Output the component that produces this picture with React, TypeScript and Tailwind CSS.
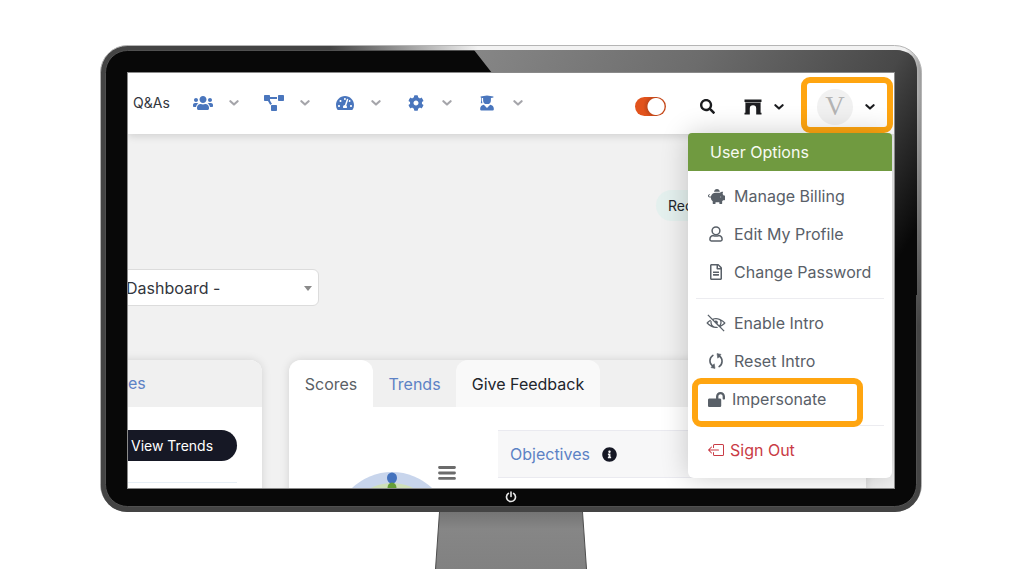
import React from 'react';
import {
	FaCog,
	FaInfoCircle,
	FaLockOpen,
	FaPiggyBank,
	FaProjectDiagram,
	FaRegFileAlt,
	FaSearch,
	FaTachometerAlt,
	FaUsers,
} from 'react-icons/fa';
import { BsBoxArrowLeft } from 'react-icons/bs';
import { LiaEyeSlash } from 'react-icons/lia';

function Chevron({ className }: { className: string }) {
	return (
		<svg viewBox="0 0 10 10" className={`w-2.5 h-2.5 ${className}`} fill="none">
			<path
				d="M1.4 3.2 L5 6.6 L8.6 3.2"
				stroke="currentColor"
				strokeWidth="2.1"
				strokeLinecap="round"
				strokeLinejoin="round"
			/>
		</svg>
	);
}

function GraduateIcon() {
	return (
		<svg viewBox="0 0 14 16" className="h-4 w-3.5" fill="currentColor">
			<path d="M7 0.4 L13.4 1.6 V2.6 L10.900 3.1 V5.2 A3.9 3.9 0 0 1 3.1 5.2 V3.1 L1.9 2.9 V5.6 L2.4 8.2 H0.8 L1.2 5.6 V2.6 L0.6 2.400 V1.6 Z" />
			<path d="M3.800 9.8 L7 12.9 L10.2 9.8 C12.4 10 13.800 11.6 13.8 13.6 V14.4 Q13.8 15.5 12.7 15.5 H1.3 Q0.2 15.5 0.2 14.4 V13.6 C0.2 11.6 1.6 10 3.8 9.8 Z" />
		</svg>
	);
}

function ArchIcon() {
	return (
		<svg viewBox="0 0 18 16" className="h-4 w-[18px]" fill="currentColor">
			<path d="M0.5 0.5 H17.5 V3 H16.6 V13.8 H17.5 V15.5 H12.2 V9.4 A3.2 3.2 0 0 0 5.8 9.4 V15.5 H0.5 V13.8 H1.4 V3 H0.5 Z" />
			<path d="M1.4 3.5 H16.6" stroke="#fff" strokeWidth="0.5" />
		</svg>
	);
}

function PersonIcon() {
	return (
		<svg viewBox="0 0 14 16" className="h-4 w-3.5" fill="none" stroke="currentColor" strokeWidth="1.5">
			<circle cx="7" cy="4.8" r="3.9" />
			<path
				d="M4.2 9.6 C1.9 9.9 0.9 11.6 0.9 13.6 Q0.9 15 2.3 15 H11.7 Q13.1 15 13.1 13.6 C13.1 11.6 12.1 9.9 9.8 9.6 Q7 10.6 4.2 9.6 Z"
				strokeLinejoin="round"
			/>
		</svg>
	);
}

function ResetIcon() {
	return (
		<svg viewBox="0 0 16 16" className="w-4 h-4" fill="none">
			<path
				d="M4.9 2.4 A6.4 6.4 0 0 0 4.6 13 M11.1 13.6 A6.4 6.4 0 0 0 11.4 3"
				stroke="currentColor"
				strokeWidth="1.6"
				strokeLinecap="round"
			/>
			<path
				d="M3 14.6 L7 15.4 L6.2 10.8 Z M13 1.4 L9 0.6 L9.8 5.2 Z"
				fill="currentColor"
				stroke="currentColor"
				strokeWidth="0.6"
				strokeLinejoin="round"
			/>
		</svg>
	);
}

const navItems = [
	{ label: 'People', icon: <FaUsers size={20} /> },
	{ label: 'Projects', icon: <FaProjectDiagram size={20} /> },
	{ label: 'Dashboards', icon: <FaTachometerAlt size={18} /> },
	{ label: 'Settings', icon: <FaCog size={16} /> },
	{ label: 'Learning', icon: <GraduateIcon /> },
];

function Header() {
	return (
		<header className="relative z-10 flex h-[61px] items-center bg-white pl-[5px] shadow-[0_2px_8px_rgba(0,0,0,0.14)]">
			<nav className="flex items-center gap-[26px] pb-0.5">
				<a href="#qa" className="-mr-1 w-[39px] text-[14px] leading-5 text-[#33363d]">
					Q&amp;As
				</a>
				{navItems.map((item) => (
					<button
						key={item.label}
						aria-label={item.label}
						className="flex w-[45px] items-center justify-between text-[#4a76bd]"
					>
						<span className="flex w-[18px] justify-center">
							<span className="shrink-0">{item.icon}</span>
						</span>
						<Chevron className="text-[#a5a5aa]" />
					</button>
				))}
			</nav>
			<div className="ml-auto flex items-center pt-1.5 text-[#1b1c1f]">
				<label className="mr-[34px] flex">
					<input
						type="checkbox"
						defaultChecked
						aria-label="Theme"
						className="h-[19px] w-[31px] appearance-none rounded-full bg-[radial-gradient(circle_at_21px_50%,#fff_8px,#c3481a_9px,#e2531c_13px)]"
					/>
				</label>
				<button aria-label="Search" className="mr-[29px]">
					<FaSearch size={15} />
				</button>
				<button aria-label="Places" className="mr-[17px] flex items-center gap-3">
					<ArchIcon />
					<Chevron className="text-[#1b1c1f]" />
				</button>
				<button
					aria-label="User menu"
					className="-mt-1 mr-px flex h-14 w-[92px] items-center gap-3 rounded-[9px] border-6 border-[#ffa510] pt-1 pl-2.5"
				>
					<span className="flex size-9 items-center justify-center rounded-full bg-[#f1f1f1] font-['Liberation_Serif',serif] text-[27px] leading-none text-[#b4b4b4]">
						V
					</span>
					<Chevron className="text-[#1b1c1f]" />
				</button>
			</div>
		</header>
	);
}

function MenuItem({
	icon,
	children,
	className = 'gap-2 text-[#596068]',
}: {
	icon: React.ReactNode;
	children: React.ReactNode;
	className?: string;
}) {
	return (
		<li>
			<button className={`flex h-[38px] w-full items-center pb-0.5 pl-[18px] ${className}`}>
				<span className="flex w-5 justify-center">{icon}</span>
				{children}
			</button>
		</li>
	);
}

function UserMenu() {
	return (
		<div className="absolute top-[60px] right-0.5 z-20 w-[204px] rounded-md bg-white pb-2 text-[16px] leading-6 shadow-[0_0_28px_rgba(0,0,0,0.2)]">
			<h2 className="rounded-t-[4px] bg-[#709a40] py-[7px] pl-[22px] text-[#f8fbf3]">User Options</h2>
			<ul className="pt-[7px]">
				<MenuItem icon={<FaPiggyBank size={17} />}>Manage Billing</MenuItem>
				<MenuItem icon={<PersonIcon />}>Edit My Profile</MenuItem>
				<MenuItem icon={<FaRegFileAlt size={16} />}>Change Password</MenuItem>
			</ul>
			<hr className="mx-2 my-1.5 border-[#ececf0]" />
			<ul className="relative">
				<MenuItem icon={<LiaEyeSlash size={20} />}>Enable Intro</MenuItem>
				<MenuItem icon={<ResetIcon />}>Reset Intro</MenuItem>
				<MenuItem icon={<FaLockOpen size={17} />} className="gap-1.5 text-[#596068]">
					Impersonate
				</MenuItem>
				<li
					aria-hidden="true"
					className="pointer-events-none absolute -bottom-2 left-1 h-[49px] w-[171px] rounded-[9px] border-6 border-[#ffa510]"
				/>
			</ul>
			<hr className="mx-2 my-1.5 border-[#ececf0]" />
			<ul>
				<MenuItem icon={<BsBoxArrowLeft size={16} />} className="gap-1 text-[#c93b45]">
					Sign Out
				</MenuItem>
			</ul>
		</div>
	);
}

function Dashboard() {
	return (
		<main className="text-[16px] leading-6">
			<div className="flex justify-end pt-14 pr-[131px]">
				<span className="w-[107px] rounded-full bg-[#e4f0ee] py-[5px] px-3 text-[14px] leading-[21px] text-[#22252c]">
					Rec
				</span>
			</div>
			<div className="relative mt-12 -ml-5 w-[211px]">
				<select
					aria-label="Dashboard"
					className="h-[37px] w-full appearance-none rounded-md border border-[#dcdcdc] bg-white pl-[17px] text-[#33363d]"
				>
					<option>Dashboard -</option>
				</select>
				<svg viewBox="0 0 8 5" className="pointer-events-none absolute top-[17px] right-[7px] h-[5px] w-2">
					<path d="M0 0 H8 L4 5 Z" fill="#8a8a8a" />
				</svg>
			</div>
			<div className="mt-[54px] flex gap-[27px]">
				<section className="-ml-5 h-52 w-[154px] shrink-0 rounded-t-xl bg-white shadow-[0_0_10px_rgba(0,0,0,0.13)]">
					<h3 className="h-[47px] rounded-t-xl bg-[#f0f0f0] pt-[11px] pl-5 text-[#5d82c5]">es</h3>
					<div className="mr-[25px] border-b border-[#e6eef5] pt-[23px] pb-[21px]">
						<button className="h-[31px] w-full rounded-r-full bg-[#161825] pl-[23px] text-left text-[14px] leading-5 text-white">
							View Trends
						</button>
					</div>
				</section>
				<section className="mr-7 h-52 flex-1 rounded-t-xl bg-white shadow-[0_0_10px_rgba(0,0,0,0.13)]">
					<div className="flex h-[47px] rounded-t-xl bg-[#f0f0f0]">
						<button className="w-[84px] rounded-t-xl bg-white text-[#5b5f66]">Scores</button>
						<button className="w-[83px] text-[#5d82c5]">Trends</button>
						<button className="w-36 rounded-t-xl bg-[#f9f9f9] text-[#22252c]">Give Feedback</button>
					</div>
					<div className="flex items-start pt-[23px]">
						<svg viewBox="0 0 120 120" className="mt-10 ml-[43px] size-[120px] shrink-0">
							<circle cx="60" cy="60" r="58" fill="#c8d5ec" />
							<circle cx="60" cy="60" r="47" fill="#cfe0b9" />
							<ellipse cx="60" cy="8" rx="5" ry="5.5" fill="#4472bd" />
							<ellipse cx="60" cy="18" rx="4.5" ry="5.5" fill="#669f38" />
						</svg>
						<button aria-label="Chart menu" className="mt-9 -ml-3.5">
							<svg viewBox="0 0 18 14" className="h-3.5 w-[18px]" stroke="#6b6b6b" strokeWidth="2.8" strokeLinecap="round">
								<path d="M1.5 1.5 H16.5 M1.5 7 H16.5 M1.5 12.4 H16.5" />
							</svg>
						</button>
						<h3 className="ml-[42px] flex h-12 flex-1 items-center gap-3 border-y border-[#eaeaf0] bg-[#f7f7f8] pl-3 text-[#5d82c5]">
							Objectives <FaInfoCircle size={15} className="text-[#161825]" />
						</h3>
					</div>
				</section>
			</div>
		</main>
	);
}

function Bezel() {
	return (
		<svg viewBox="0 0 822 467" preserveAspectRatio="none" className="absolute inset-0 h-full w-full">
			<defs>
				<linearGradient id="rim" x1="0" y1="0" x2="1" y2="0">
					<stop offset="0" stopColor="#444" />
					<stop offset="0.28" stopColor="#444" />
					<stop offset="0.46" stopColor="#f2f2f2" />
					<stop offset="0.98" stopColor="#f2f2f2" />
					<stop offset="1" stopColor="#999" />
				</linearGradient>
				<linearGradient id="rimLow" x1="0" y1="0" x2="0" y2="1">
					<stop offset="0.1" stopColor="#444" stopOpacity="0" />
					<stop offset="0.6" stopColor="#444" />
					<stop offset="1" stopColor="#444" />
				</linearGradient>
				<linearGradient id="shine" gradientUnits="userSpaceOnUse" x1="380" y1="0" x2="800" y2="250">
					<stop offset="0" stopColor="#868686" />
					<stop offset="0.4" stopColor="#6c6c6c" />
					<stop offset="0.75" stopColor="#484848" />
					<stop offset="0.96" stopColor="#080808" />
				</linearGradient>
			</defs>
			<rect x="0.5" y="0.5" width="821" height="466" rx="27" fill="url(#rim)" stroke="#b5b5b5" />
			<rect x="1" y="2" width="820" height="465" rx="26" fill="url(#rimLow)" />
			<rect x="5.5" y="5.5" width="811" height="456" rx="22" fill="#080808" stroke="#505050" />
			<path d="M374 5 H795 Q817 5 817 27 V250 H794 V28 H392 Z" fill="url(#shine)" />
			<rect x="27.5" y="27.5" width="767" height="416" fill="none" stroke="#8a8a8a" />
		</svg>
	);
}

function App() {
	return (
		<div className="min-h-screen overflow-hidden bg-white pt-[45px] pr-[102px] pl-[100px] font-['Inter','Liberation_Sans',sans-serif]">
			<div className="relative px-7 pt-7">
				<Bezel />
				<div className="relative aspect-[766/415] overflow-hidden bg-[#f1f1f1]">
					<Header />
					<UserMenu />
					<Dashboard />
				</div>
				<div className="relative flex h-6 justify-center pt-[3px]">
					<button aria-label="Power" className="size-3">
						<svg viewBox="0 0 12 12" fill="none" stroke="#e8e8e8" strokeWidth="1.6" strokeLinecap="round">
							<path d="M6 1 V5.5 M3.4 2.4 A4.5 4.5 0 1 0 8.6 2.4" />
						</svg>
					</button>
				</div>
			</div>
			<svg viewBox="0 0 152 57" className="mx-auto h-[57px] w-[152px]">
				<defs>
					<linearGradient id="stand" x1="0" y1="0" x2="0" y2="1">
						<stop offset="0" stopColor="#747474" />
						<stop offset="0.3" stopColor="#868686" />
						<stop offset="1" stopColor="#818181" />
					</linearGradient>
				</defs>
				<path d="M4.5 0 H147.5 L151.5 57 H0.5 Z" fill="url(#stand)" />
				<path d="M4.5 0 L0.5 57 M147.5 0 L151.5 57" stroke="#4e4e4e" />
			</svg>
		</div>
	);
}

export default App;
